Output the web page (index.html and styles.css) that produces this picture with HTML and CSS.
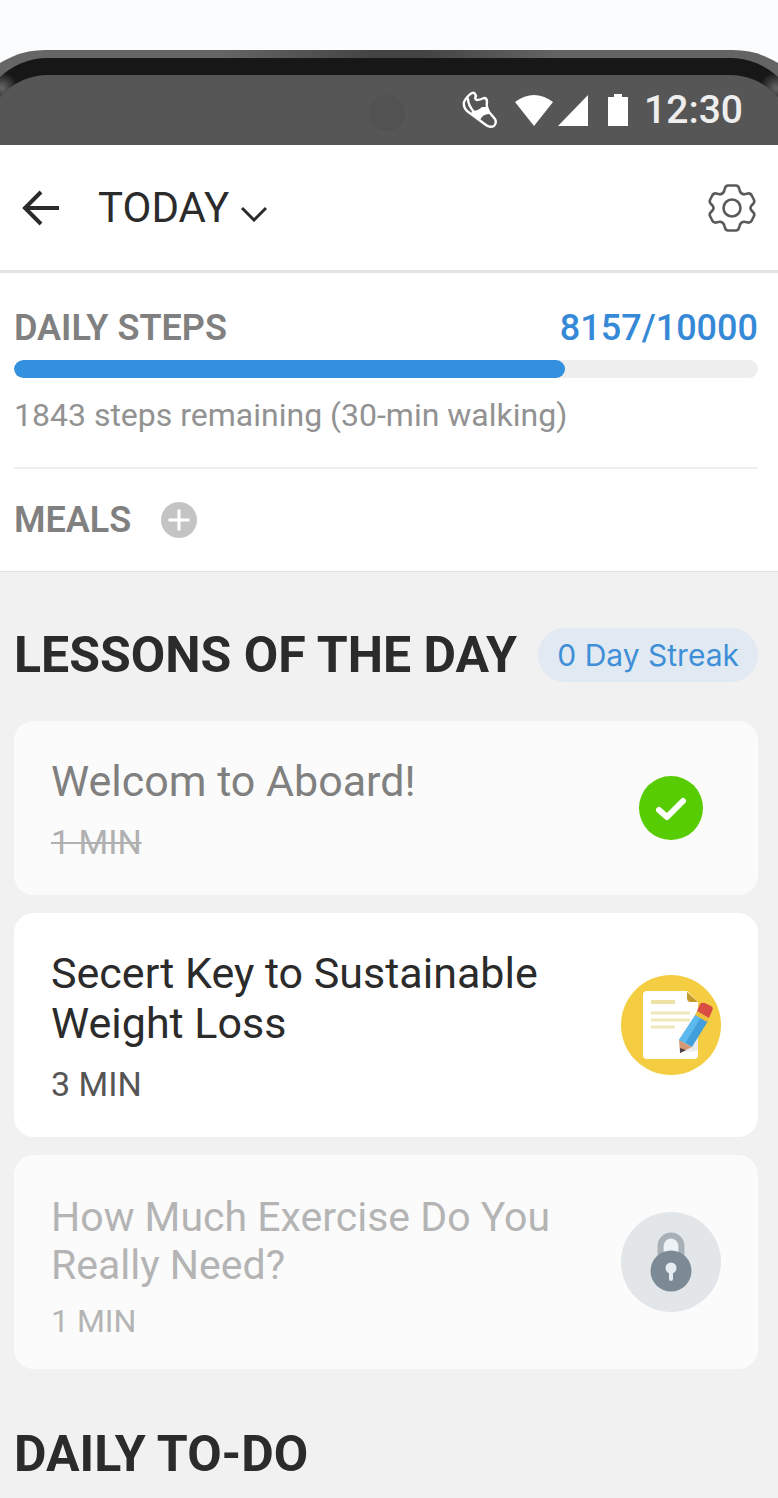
FILE: index.html
```html
<!doctype html>
<html lang="en">
  <head>
    <meta charset="UTF-8" />
    <meta name="viewport" content="width=device-width, initial-scale=1.0" />
    <title>Today</title>
    <link rel="stylesheet" href="styles.css">
  </head>
  <body>
    <div class="phone">
      <div class="phone-rim">
        <div class="phone-bezel">
          <div class="status-bar">
            <span class="camera"></span>
            <svg class="status-shoe" width="36" height="38" viewBox="0 0 36 38" fill="none" stroke="#fff" stroke-width="2.4" stroke-linejoin="round" stroke-linecap="round">
              <path d="M2 11 Q5 5 10 2 Q12 1 13 3 L14 5 Q12 8 15 9 Q18 9 22 7 Q25 7 25 11 Q24 17 27 21 L33 28 Q35 32 32 35 Q28 37 24 34 L5 20 Q1 16 2 11Z" />
              <path d="M6 8 Q6 14 12 21" />
              <path d="M10 20 Q16 20 20 16 L26 16 L29 23 Q21 22 18 29 L9 23Z" fill="#fff" stroke="none" />
            </svg>
            <svg class="status-wifi" width="40" height="33" viewBox="0 0 40 33">
              <path d="M1 8 Q20 -6 39 8 L20 32Z" fill="#fff" />
            </svg>
            <svg class="status-signal" width="30" height="31" viewBox="0 0 30 31">
              <path d="M30 0 V31 H0Z" fill="#fff" />
            </svg>
            <svg class="status-battery" width="20" height="32" viewBox="0 0 20 32">
              <path d="M0 3 H6 V0 H14 V3 H20 V32 H0Z" fill="#fff" />
            </svg>
            <time class="clock">12:30</time>
          </div>
        </div>
      </div>
    </div>

    <header class="app-header">
      <button class="icon-btn back-btn" aria-label="Back">
        <svg width="38" height="36" viewBox="0 0 38 36" fill="none" stroke="#2b2b2b" stroke-width="4">
          <path d="M37 18 H4 M19 2 L3 18 L19 34" />
        </svg>
      </button>
      <button class="day-btn">
        TODAY
        <svg width="26" height="16" viewBox="0 0 26 16" fill="none" stroke="#2b2b2b" stroke-width="3">
          <path d="M1 2 L13 14 L25 2" />
        </svg>
      </button>
      <button class="icon-btn settings-btn" aria-label="Settings">
        <svg width="48" height="48" viewBox="0 0 48 48" fill="none" stroke="#5a5a5a" stroke-width="2.6" stroke-linejoin="round">
          <path d="M20 1.5 H28 Q30 1.5 31 4 L32 7.5 Q34 11 37.5 10 L40 9.500 Q42.500 9 44 12 L46 16 Q47 18 45 20 L43.500 21.500 Q41.500 24 43.500 26.500 L45 28 Q47 30 46 32 L44 36 Q42.500 39 40 38.500 L37.500 38 Q34 37 32 40.500 L31 44 Q30 46.500 28 46.500 H20 Q18 46.500 17 44 L16 40.500 Q14 37 10.500 38 L8 38.500 Q5.500 39 4 36 L2 32 Q1 30 3 28 L4.500 26.500 Q6.500 24 4.500 21.500 L3 20 Q1 18 2 16 L4 12 Q5.500 9 8 9.500 L10.500 10 Q14 11 16 7.500 L17 4 Q18 1.500 20 1.500Z" />
          <circle cx="24" cy="24" r="8.500" />
        </svg>
      </button>
    </header>

    <section class="tracker">
      <div class="steps">
        <div class="steps-head">
          <h2 class="label">DAILY STEPS</h2>
          <span class="steps-count">8157/10000</span>
        </div>
        <div class="progress">
          <div class="progress-fill" style="width: 74%"></div>
        </div>
        <p class="steps-note">1843 steps remaining (30-min walking)</p>
      </div>
      <div class="meals">
        <h2 class="label">MEALS</h2>
        <button class="icon-btn" aria-label="Add meal">
          <svg width="36" height="36" viewBox="0 0 36 36">
            <circle cx="18" cy="18" r="18" fill="#c4c4c4" />
            <path d="M18 7.500 V28.500 M7.500 18 H28.500" stroke="#fff" stroke-width="3" />
          </svg>
        </button>
      </div>
    </section>

    <main class="content">
      <div class="content-head">
        <h1 class="heading">LESSONS OF THE DAY</h1>
        <span class="streak">0 Day Streak</span>
      </div>

      <article class="card card-done">
        <div class="card-text">
          <h3 class="card-title">Welcom to Aboard!</h3>
          <p class="card-time"><s>1 MIN</s></p>
        </div>
        <div class="card-icon">
          <svg width="64" height="64" viewBox="0 0 64 64">
            <circle cx="32" cy="32" r="32" fill="#58cc02" />
            <path d="M20 34 L28 41 L44 25" fill="none" stroke="#fff" stroke-width="6" stroke-linecap="round" stroke-linejoin="round" />
          </svg>
        </div>
      </article>

      <article class="card">
        <div class="card-text">
          <h3 class="card-title">Secert Key to Sustainable Weight Loss</h3>
          <p class="card-time">3 MIN</p>
        </div>
        <div class="card-icon">
          <svg width="100" height="100" viewBox="0 0 100 100">
            <circle cx="50" cy="50" r="50" fill="#f5cd43" />
            <path d="M26 16 H66 L77 27 V80 Q77 84 73 84 H26 Q22 84 22 80 V20 Q22 16 26 16Z" fill="#fff" />
            <path d="M66 17 L77 27 H70 Q66 27 66 23Z" fill="#c39a28" />
            <path d="M30 27 H54" stroke="#ede2a4" stroke-width="4" />
            <path d="M30 38 H69 M30 45 H69 M30 52 H54" stroke="#f1e8b9" stroke-width="3" />
            <path d="M61 77 L77 61 V76Z" fill="#ececf0" />
            <path d="M75 39 L87 46 L71 72 L58 65Z" fill="#429fdc" />
            <path d="M75 39 L80 42 L64 69 L58 65Z" fill="#5bb9ed" />
            <path d="M58 65 L71 72 L59 78Z" fill="#d59a75" />
            <path d="M59 73 L65 75 L59 78Z" fill="#4c3f46" />
            <path d="M76 36 L88 43 L86 47 L74 40Z" fill="#edbd3c" />
            <path d="M79 29 Q81 27 84 28 L90 31 Q93 33 91 36 L88 43 L76 36Z" fill="#d94d43" />
          </svg>
        </div>
      </article>

      <article class="card card-locked">
        <div class="card-text">
          <h3 class="card-title">How Much Exercise Do You Really Need?</h3>
          <p class="card-time">1 MIN</p>
        </div>
        <div class="card-icon">
          <svg width="100" height="100" viewBox="0 0 100 100">
            <circle cx="50" cy="50" r="50" fill="#e2e6e8" />
            <path d="M43 40 V34 A7 7 0 0 1 57 34 V40Z" fill="#edf2f6" />
            <path d="M39.500 46 V34 A10.500 10.500 0 0 1 60.500 34 V46" fill="none" stroke="#a8b0b7" stroke-width="6" />
            <circle cx="50" cy="59" r="20.500" fill="#7b8a94" />
            <circle cx="50" cy="56" r="5.500" fill="#e6edf2" />
            <path d="M50 58 V67" stroke="#e6edf2" stroke-width="4" stroke-linecap="round" />
          </svg>
        </div>
      </article>

      <h1 class="heading todo-heading">DAILY TO-DO</h1>
    </main>
  </body>
</html>
```
FILE: styles.css
```css
* {
  box-sizing: border-box;
}

body {
  margin: 0;
  min-height: 100vh;
  display: flex;
  flex-direction: column;
  font-family: Roboto, 'Liberation Sans', sans-serif;
  color: #2b2b2b;
  background-color: #fff;
}

h1,
h2,
h3,
p {
  margin: 0;
}

button {
  padding: 0;
  border: none;
  background: none;
  font: inherit;
  color: inherit;
  cursor: pointer;
}

svg {
  display: block;
  flex-shrink: 0;
}

/* top edge of the handset, its sides run past the window */
.phone {
  padding-top: 50px;
  overflow: hidden;
  background-color: #fbfcfd;
}

.phone-rim {
  margin: 0 -39px;
  padding: 8px 17px 0;
  border-radius: 84px 84px 0 0;
  background: linear-gradient(90deg, #666 30%, #444 48%, #444 54%, #646464 70%);
}

.phone-bezel {
  padding: 17px 7px 0;
  border-radius: 70px 70px 0 0;
  background:
    radial-gradient(circle at 24px 30px, #666 0, transparent 16px),
    radial-gradient(circle at calc(100% - 24px) 30px, #666 0, transparent 16px),
    #171717;
}

.status-bar {
  position: relative;
  display: flex;
  align-items: center;
  justify-content: flex-end;
  height: 70px;
  padding-right: 50px;
  border-radius: 63px 63px 0 0;
  background-color: #565656;
}

.camera {
  position: absolute;
  left: 50%;
  top: 20px;
  width: 36px;
  height: 36px;
  margin-left: -20px;
  border-radius: 50%;
  background-color: #525252;
}

.status-shoe {
  margin-right: 16px;
}

.status-wifi {
  margin-right: 4px;
}

.status-signal {
  margin-right: 20px;
}

.status-battery {
  margin-right: 16px;
}

.clock {
  font-size: 39px;
  line-height: 48px;
  font-weight: 500;
  color: #eee;
}

.app-header {
  display: flex;
  align-items: center;
  height: 128px;
  padding: 0 22px;
  border-bottom: 3px solid #e4e4e4;
}

.day-btn {
  display: flex;
  align-items: center;
  gap: 12px;
  margin-left: 38px;
  font-size: 42px;
  line-height: 50px;
}

.day-btn svg {
  margin-top: 12px;
}

.settings-btn {
  margin-left: auto;
}

.tracker {
  padding: 0 20px 0 14px;
  border-bottom: 1px solid #e0e0e0;
}

.steps {
  padding: 34px 0 33px;
  border-bottom: 2px solid #eee;
}

.steps-head {
  display: flex;
  justify-content: space-between;
}

.label,
.steps-count {
  font-size: 36px;
  line-height: 42px;
  font-weight: 600;
}

.label {
  color: #808080;
}

.steps-count {
  font-weight: 500;
  color: #3689d6;
}

.progress {
  height: 18px;
  margin-top: 11px;
  border-radius: 9px;
  overflow: hidden;
  background-color: #eee;
}

.progress-fill {
  height: 100%;
  border-radius: 9px;
  background-color: #3290df;
}

.steps-note {
  margin-top: 18px;
  font-size: 32px;
  line-height: 38px;
  color: #929292;
}

.meals {
  display: flex;
  align-items: center;
  gap: 30px;
  padding: 30px 0;
}

.content {
  flex-grow: 1;
  padding: 56px 20px 16px 14px;
  background-color: #f1f1f1;
}

.content-head {
  display: flex;
  align-items: center;
  justify-content: space-between;
  margin-bottom: 39px;
}

.heading {
  font-size: 50px;
  line-height: 54px;
  font-weight: 700;
}

.streak {
  padding: 0 19px;
  border-radius: 27px;
  font-family: Inter, Roboto, sans-serif;
  font-size: 30px;
  line-height: 54px;
  color: #3e8fd8;
  background-color: #e1e9f2;
}

.card {
  display: flex;
  align-items: center;
  justify-content: space-between;
  gap: 20px;
  margin-bottom: 18px;
  padding: 0 37px;
  border-radius: 20px;
  background-color: #fff;
}

.card-text {
  padding: 35px 0 33px;
}

.card-title {
  font-size: 43px;
  line-height: 50px;
  font-weight: 400;
}

.card-time {
  margin-top: 16px;
  font-size: 34px;
  line-height: 40px;
  color: #555;
}

.card-time s {
  text-decoration-thickness: 2px;
}

.card-icon {
  display: flex;
  justify-content: center;
  flex-shrink: 0;
  width: 100px;
}

.card-done,
.card-locked {
  background-color: #fbfbfb;
}

.card-done .card-title {
  color: #808080;
}

.card-done .card-time {
  color: #b0b0b0;
}

.card-locked .card-text {
  padding: 38px 0 30px;
}

.card-locked .card-title {
  font-size: 41px;
  line-height: 48px;
  color: #b4b4b4;
}

.card-locked .card-time {
  margin-top: 14px;
  font-size: 32px;
  line-height: 36px;
  color: #b4b4b4;
}

.todo-heading {
  margin-top: 58px;
}
```
